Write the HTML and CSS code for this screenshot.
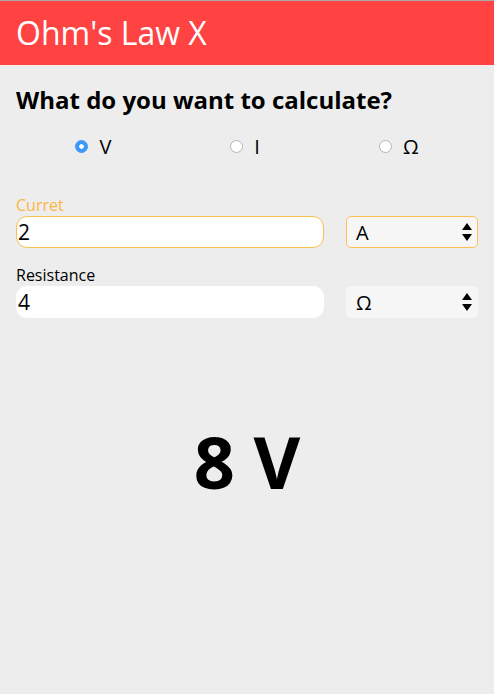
FILE: index.html
```html
<!DOCTYPE html>
<html>
<head>
<meta charset="utf-8">
<link rel="stylesheet" href="styles.css">
</head>
<body>
<div class="app">
  <header class="header">Ohm's Law X</header>
  <main class="content">
    <h2 class="question">What do you want to calculate?</h2>
    <div class="choices">
      <label class="choice"><input type="radio" name="calc" checked><span>V</span></label>
      <label class="choice"><input type="radio" name="calc"><span>I</span></label>
      <label class="choice"><input type="radio" name="calc"><span>Ω</span></label>
    </div>
    <div class="field focused">
      <label class="field-label">Curret</label>
      <div class="field-row">
        <input class="num" type="text" value="2">
        <div class="unit"><span>A</span><svg class="arrows" width="10" height="20" viewBox="0 0 10 20"><path d="M5 1 L10 8 L0 8 Z M0 12 L10 12 L5 19 Z" fill="#000"/></svg></div>
      </div>
    </div>
    <div class="field">
      <label class="field-label">Resistance</label>
      <div class="field-row">
        <input class="num" type="text" value="4">
        <div class="unit"><span>Ω</span><svg class="arrows" width="10" height="20" viewBox="0 0 10 20"><path d="M5 1 L10 8 L0 8 Z M0 12 L10 12 L5 19 Z" fill="#000"/></svg></div>
      </div>
    </div>
    <div class="result">8 V</div>
  </main>
</div>
</body>
</html>
```
FILE: styles.css
```css
html { background: #fff; }
body {
  margin: 0;
  font-family: "Open Sans", "Noto Sans", sans-serif;
}
.app {
  width: 494px;
  height: 693px;
  background: #ededed;
  border-top: 1px solid #a9a9a9;
  display: flex;
  flex-direction: column;
}
.header {
  background: #ff4242;
  color: #fff;
  font-size: 32px;
  line-height: 64px;
  height: 64px;
  padding-left: 16px;
}
.content {
  padding: 0 16px;
  display: flex;
  flex-direction: column;
}
.question {
  margin: 20px 0 0;
  font-size: 24px;
  font-weight: 700;
  line-height: 30px;
  color: #000;
}
.choices {
  display: flex;
  justify-content: space-around;
  margin-top: 19px;
  height: 24px;
  align-items: center;
}
.choice {
  display: flex;
  align-items: center;
  gap: 11px;
  font-size: 20px;
  color: #000;
}
.choice input {
  appearance: none;
  -webkit-appearance: none;
  margin: 0;
  width: 13px;
  height: 13px;
  border-radius: 50%;
  background: #fff;
  border: 1px solid #b5b5b5;
  box-sizing: border-box;
}
.choice input:checked {
  background: #3b99fc;
  border-color: #3b99fc;
  background-image: radial-gradient(circle, #fff 0 2px, transparent 2.5px);
}
.field { margin-top: 37px; }
.field + .field { margin-top: 17px; }
.field-label {
  display: block;
  font-size: 16px;
  line-height: 20px;
  color: #000;
}
.focused .field-label { color: #fbb641; }
.field-row {
  display: flex;
  gap: 22px;
  margin-top: 1px;
}
.num {
  width: 308px;
  height: 32px;
  box-sizing: border-box;
  border: 1px solid transparent;
  border-radius: 11px;
  background: #fff;
  font-family: inherit;
  font-size: 21px;
  padding: 0 0 0 1px;
  margin: 0;
  color: #000;
  outline: none;
}
.focused .num { border-color: #fbc04f; }
.unit {
  width: 132px;
  height: 32px;
  box-sizing: border-box;
  border: 1px solid transparent;
  border-radius: 5px;
  background: #f6f6f6;
  display: flex;
  align-items: center;
  justify-content: space-between;
  padding: 0 5px 0 9px;
  font-size: 20px;
  color: #000;
}
.focused .unit { border-color: #fbc04f; }
.result {
  margin-top: 103px;
  text-align: center;
  font-size: 72px;
  font-weight: 700;
  line-height: 80px;
  color: #000;
}
```
